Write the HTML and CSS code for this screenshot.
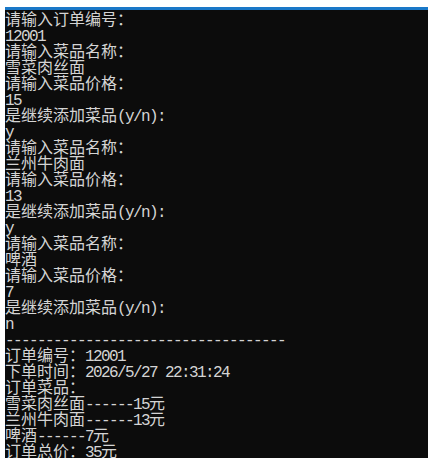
FILE: index.html
```html
<!DOCTYPE html>
<html lang="zh-CN">
<head>
<meta charset="utf-8">
<title>Console</title>
<link rel="stylesheet" href="styles.css">
</head>
<body>
<div class="window">
  <div class="out">
    <div class="ln">请输入订单编号：</div>
    <div class="ln"><span class="en">12001</span></div>
    <div class="ln">请输入菜品名称：</div>
    <div class="ln">雪菜肉丝面</div>
    <div class="ln">请输入菜品价格：</div>
    <div class="ln"><span class="en">15</span></div>
    <div class="ln">是继续添加菜品<span class="en">(y/n):</span></div>
    <div class="ln"><span class="en">y</span></div>
    <div class="ln">请输入菜品名称：</div>
    <div class="ln">兰州牛肉面</div>
    <div class="ln">请输入菜品价格：</div>
    <div class="ln"><span class="en">13</span></div>
    <div class="ln">是继续添加菜品<span class="en">(y/n):</span></div>
    <div class="ln"><span class="en">y</span></div>
    <div class="ln">请输入菜品名称：</div>
    <div class="ln">啤酒</div>
    <div class="ln">请输入菜品价格：</div>
    <div class="ln"><span class="en">7</span></div>
    <div class="ln">是继续添加菜品<span class="en">(y/n):</span></div>
    <div class="ln"><span class="en">n</span></div>
    <div class="ln"><span class="en">-----------------------------------</span></div>
    <div class="ln">订单编号：<span class="en">12001</span></div>
    <div class="ln">下单时间：<span class="en">2026/5/27 22:31:24</span></div>
    <div class="ln">订单菜品：</div>
    <div class="ln">雪菜肉丝面<span class="en">------15</span>元</div>
    <div class="ln">兰州牛肉面<span class="en">------13</span>元</div>
    <div class="ln">啤酒<span class="en">------7</span>元</div>
    <div class="ln">订单总价：<span class="en">35</span>元</div>
  </div>
</div>
</body>
</html>
```
FILE: styles.css
```css
html, body {
  margin: 0;
  padding: 0;
  background: #ffffff;
}

body {
  padding-top: 7px;
  padding-left: 5px;
}

.window {
  width: 423px;
  height: 448px;
  background: #0c0c0c;
  border-top: 3px solid #1a78c8;
  overflow: hidden;
}

.out {
  color: #d4d4d4;
  font-family: "Noto Sans CJK SC", "Liberation Mono", monospace;
  font-size: 16px;
  line-height: 16px;
}

.ln {
  height: 16px;
  white-space: pre;
}

.en {
  font-family: "Liberation Mono", monospace;
  font-size: 16px;
  letter-spacing: -1.6px;
}
```
